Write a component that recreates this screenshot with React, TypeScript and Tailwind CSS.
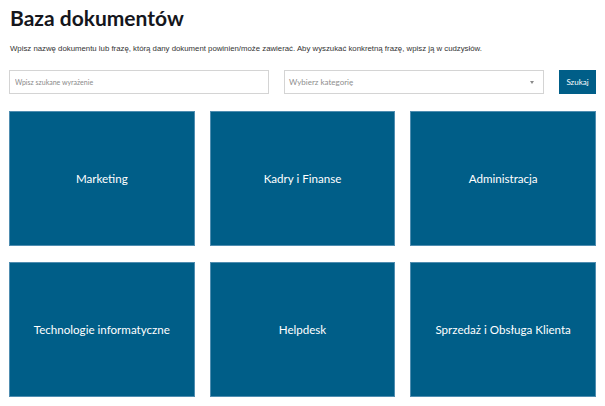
import React from 'react';

const categories = [
  'Marketing',
  'Kadry i Finanse',
  'Administracja',
  'Technologie informatyczne',
  'Helpdesk',
  'Sprzedaż i Obsługa Klienta',
];

const App = () => {
  return (
    <div className="min-h-screen w-full bg-white px-[9px] pt-[5px] font-['Liberation_Sans',Arial,sans-serif]">
      <h1 className="pl-px font-['Lato',sans-serif] text-[21px] font-bold leading-[26px] text-[#15161c]">
        Baza dokumentów
      </h1>

      <p className="mt-[13px] pl-px text-[7.8px] leading-[10px] text-[#333]">
        Wpisz nazwę dokumentu lub frazę, którą dany dokument powinien/może zawierać. Aby wyszukać konkretną frazę, wpisz ją w cudzysłów.
      </p>

      <div className="mt-[16px] flex items-center gap-[15px]">
        <input
          type="text"
          placeholder="Wpisz szukane wyrażenie"
          className="h-[24px] w-[260px] border border-[#d4d4d4] bg-white px-[5px] font-['Lato',sans-serif] text-[7px] text-[#444] placeholder:text-[#8a8a8a] focus:outline-none"
        />
        <div className="relative flex h-[24px] w-[260px] items-center border border-[#d4d4d4] bg-white px-[4px] font-['Lato',sans-serif] text-[8px] text-[#8e8e8e]">
          Wybierz kategorię
          <span className="absolute right-[9px] top-[10px] h-0 w-0 border-x-[2px] border-t-[3px] border-x-transparent border-t-[#8a8a8a]" />
        </div>
        <button className="h-[24px] w-[37px] bg-[#005e88] font-['Lato',sans-serif] text-[8px] text-white">
          Szukaj
        </button>
      </div>

      <div className="mt-[17px] grid grid-cols-3 gap-x-[15px] gap-y-[16px]">
        {categories.map((name) => (
          <a
            key={name}
            href="#"
            className="flex h-[135px] items-center justify-center border border-[#4f8db0] bg-[#005e88] pt-px font-['Lato',sans-serif] text-[11.6px] text-white"
          >
            {name}
          </a>
        ))}
      </div>
    </div>
  );
};

export default App;
